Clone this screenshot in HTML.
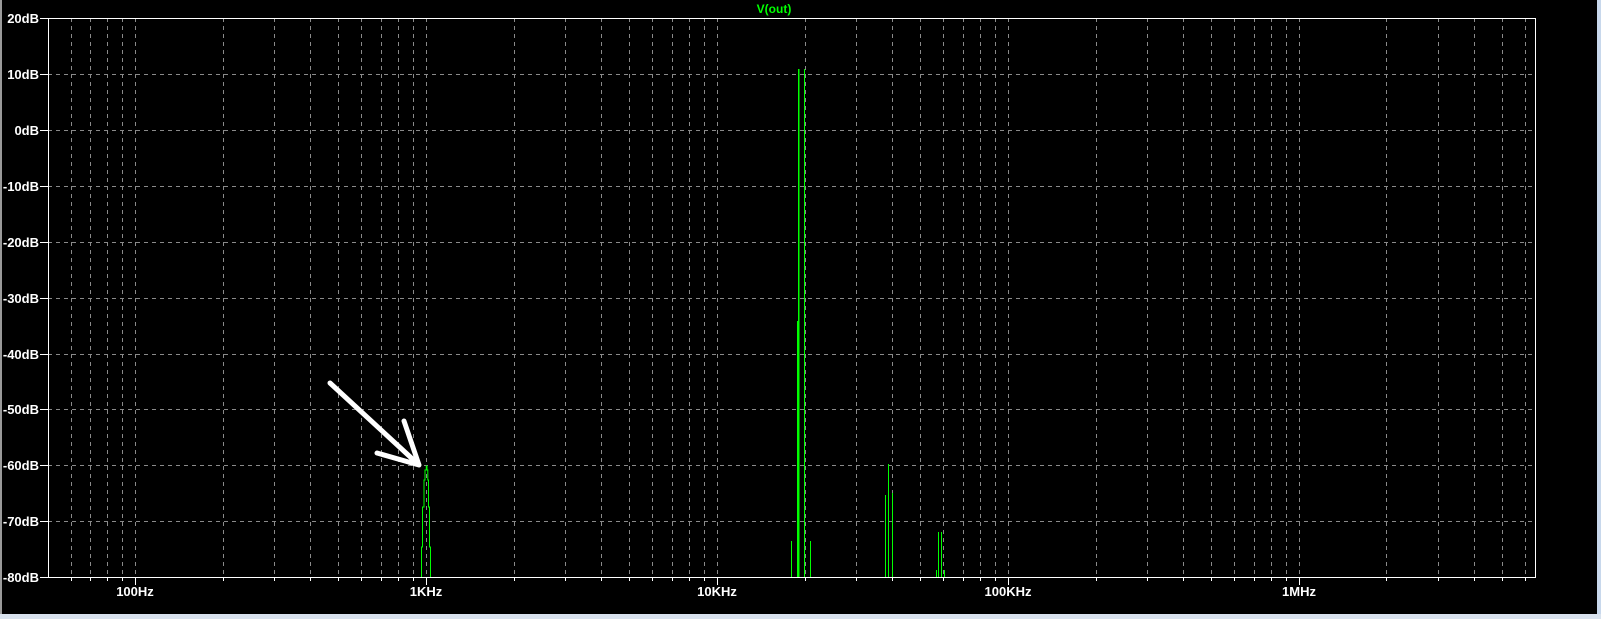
<!DOCTYPE html>
<html><head><meta charset="utf-8"><style>
html,body{margin:0;padding:0;background:#000;width:1601px;height:619px;overflow:hidden}
svg{display:block}
text{font-family:"Liberation Sans",sans-serif;font-weight:bold;font-size:13px;fill:#fff}
</style></head><body>
<svg width="1601" height="619" viewBox="0 0 1601 619" xmlns="http://www.w3.org/2000/svg">
<rect x="0" y="0" width="1601" height="619" fill="#000"/>
<rect x="0" y="0" width="2" height="619" fill="#9a9a9a"/>
<rect x="1597" y="0" width="4" height="619" fill="#c8d8ec"/>
<rect x="0" y="614" width="1601" height="5" fill="#d8e2ee"/>
<g stroke="#8a8a8a" stroke-width="1" stroke-dasharray="4,4" fill="none">
<path d="M71.5 18V577M90.5 18V577M107.5 18V577M122.5 18V577M135.5 18V577
M223.5 18V577M274.5 18V577M310.5 18V577M338.5 18V577M361.5 18V577M381.5 18V577M398.5 18V577M413.5 18V577M426.5 18V577
M514.5 18V577M565.5 18V577M601.5 18V577M629.5 18V577M652.5 18V577M672.5 18V577M689.5 18V577M704.5 18V577M717.5 18V577
M805.5 18V577M856.5 18V577M892.5 18V577M920.5 18V577M943.5 18V577M963.5 18V577M980.5 18V577M995.5 18V577M1008.5 18V577
M1096.5 18V577M1147.5 18V577M1183.5 18V577M1211.5 18V577M1234.5 18V577M1254.5 18V577M1271.5 18V577M1286.5 18V577M1299.5 18V577
M1386.5 18V577M1438.5 18V577M1474.5 18V577M1502.5 18V577M1525.5 18V577"/>
<path d="M48 74.5H1535M48 130.5H1535M48 186.5H1535M48 242.5H1535M48 298.5H1535M48 354.5H1535M48 409.5H1535M48 465.5H1535M48 521.5H1535"/>
</g>
<g stroke="#fff" stroke-width="1" fill="none">
<rect x="48.5" y="18.5" width="1487" height="559"/>
<path d="M40 18.5H48M40 74.5H48M40 130.5H48M40 186.5H48M40 242.5H48M40 298.5H48M40 354.5H48M40 409.5H48M40 465.5H48M40 521.5H48M40 577.5H48"/>
<path d="M71.5 577V581M90.5 577V581M107.5 577V581M122.5 577V581
M223.5 577V581M274.5 577V581M310.5 577V581M338.5 577V581M361.5 577V581M381.5 577V581M398.5 577V581M413.5 577V581
M514.5 577V581M565.5 577V581M601.5 577V581M629.5 577V581M652.5 577V581M672.5 577V581M689.5 577V581M704.5 577V581
M805.5 577V581M856.5 577V581M892.5 577V581M920.5 577V581M943.5 577V581M963.5 577V581M980.5 577V581M995.5 577V581
M1096.5 577V581M1147.5 577V581M1183.5 577V581M1211.5 577V581M1234.5 577V581M1254.5 577V581M1271.5 577V581M1286.5 577V581
M1386.5 577V581M1438.5 577V581M1474.5 577V581M1502.5 577V581M1525.5 577V581
M135.5 577V585M426.5 577V585M717.5 577V585M1008.5 577V585M1299.5 577V585"/>
</g>
<g stroke="#00ff00" stroke-width="1" fill="none">
<path d="M421.5 577V547H422.5V507H424V480H425V470H426.3V466H427V470H427.8V480H428.5V507H429.5V547H430.5V577"/>
<path d="M791.5 577V541M797.5 577V321M798.5 577V69M799 577V69M804.5 577V69M810.5 577V541
M885.5 577V495M888.5 577V464M892.5 577V493M938.5 577V532M941.5 577V532M936.5 577V570M944.5 577V570"/>
</g>
<g stroke="#fff" stroke-width="5" stroke-linecap="round" fill="none">
<path d="M330 383L419 465M404 421L419 465M377 453L419 465"/>
</g>
<text x="774" y="13" text-anchor="middle" style="fill:#00ff00;font-size:12px">V(out)</text>
<g text-anchor="end">
<text x="39" y="23">20dB</text>
<text x="39" y="79">10dB</text>
<text x="39" y="135">0dB</text>
<text x="39" y="191">-10dB</text>
<text x="39" y="247">-20dB</text>
<text x="39" y="303">-30dB</text>
<text x="39" y="359">-40dB</text>
<text x="39" y="414">-50dB</text>
<text x="39" y="470">-60dB</text>
<text x="39" y="526">-70dB</text>
<text x="39" y="582">-80dB</text>
</g>
<g text-anchor="middle">
<text x="135" y="596">100Hz</text>
<text x="426" y="596">1KHz</text>
<text x="717" y="596">10KHz</text>
<text x="1008" y="596">100KHz</text>
<text x="1299" y="596">1MHz</text>
</g>
</svg>
</body></html>
